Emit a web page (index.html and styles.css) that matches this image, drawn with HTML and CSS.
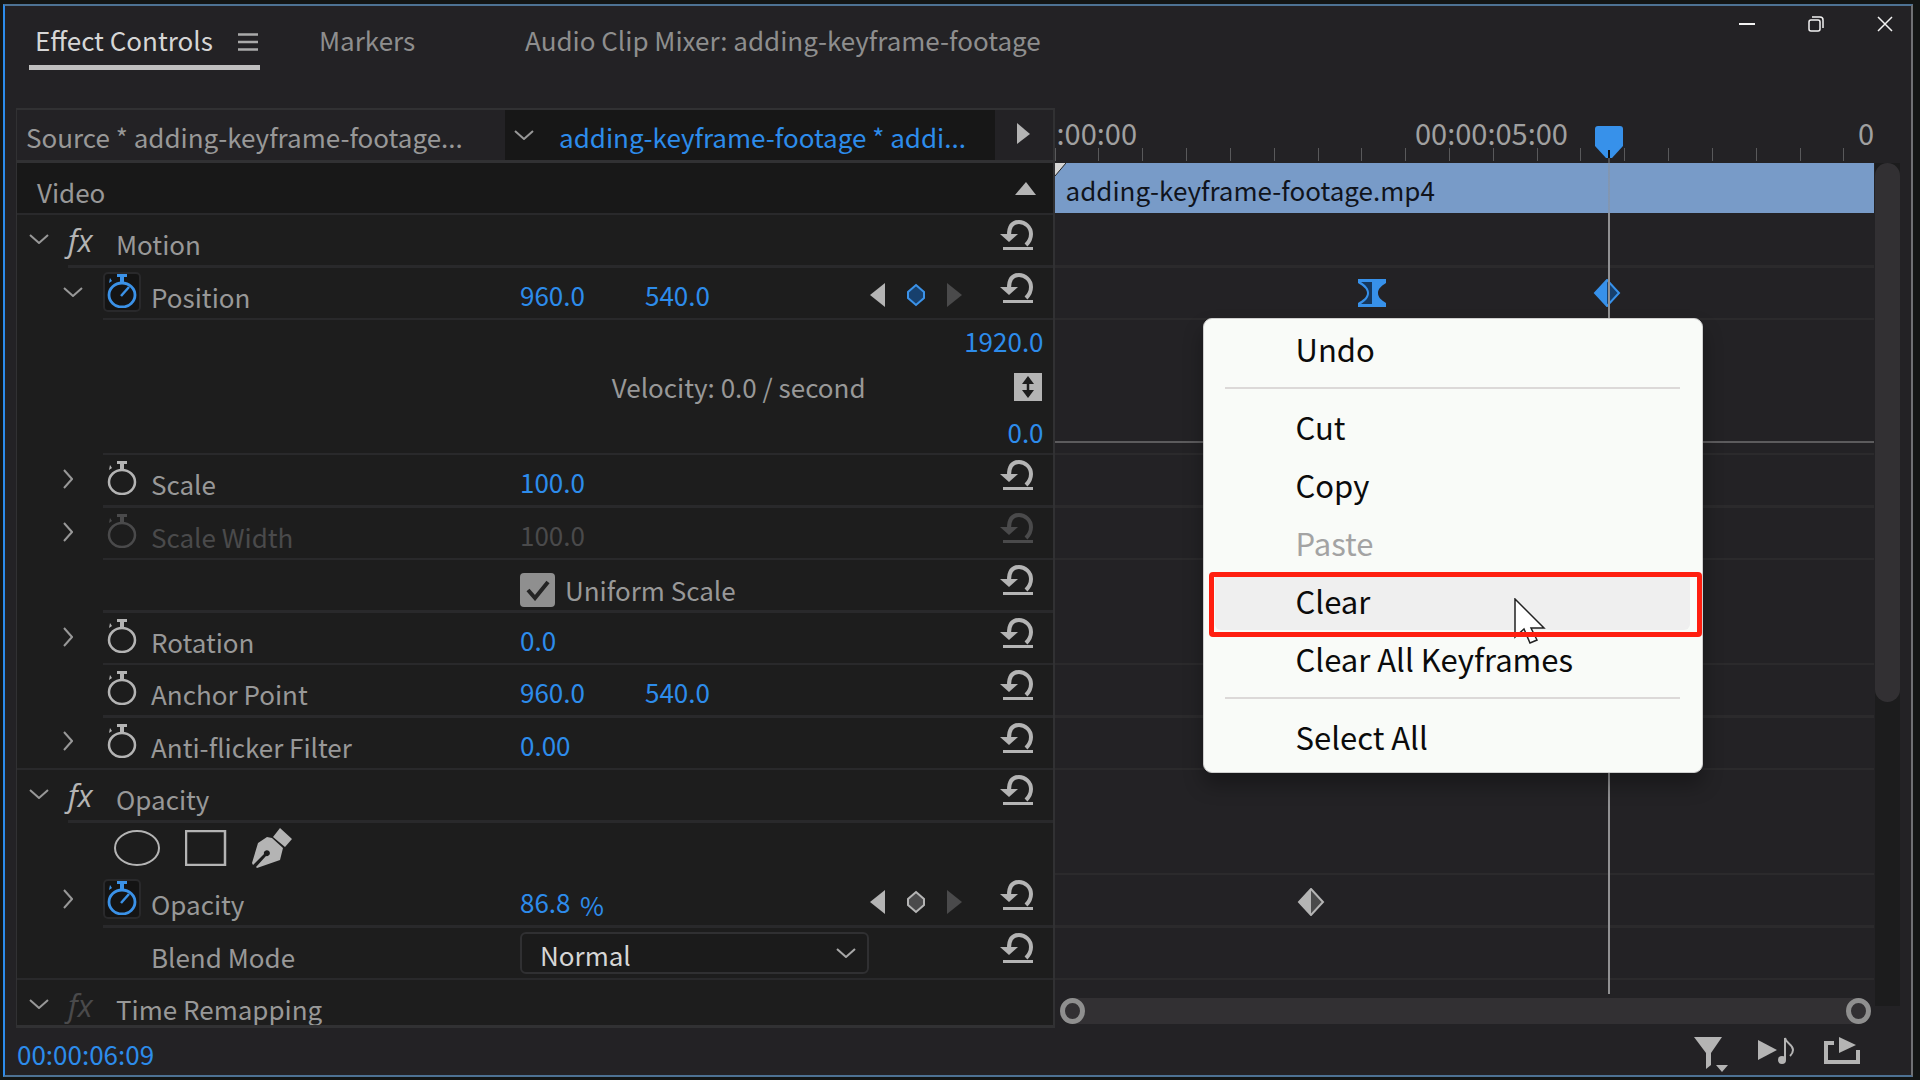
FILE: index.html
```html
<!DOCTYPE html>
<html lang="en">
<head>
<meta charset="utf-8">
<title>Effect Controls</title>
<link rel="stylesheet" href="styles.css">
</head>
<body>
<svg class="defs" aria-hidden="true">
  <symbol id="down" viewBox="0 0 20 10"><path d="M1 1 10 9 19 1" fill="none" stroke="currentColor" stroke-width="2"/></symbol>
  <symbol id="right" viewBox="0 0 10 20"><path d="M1 1 9 10 1 19" fill="none" stroke="currentColor" stroke-width="2"/></symbol>
  <symbol id="reset" viewBox="0 0 34 30"><path d="M9 15C9 6 13 2 19 2s12 5 12 12c0 5-2 8-5 11" fill="none" stroke="currentColor" stroke-width="4"/><path d="M0 14h18l-9 8zM3 27h30v3H3z" fill="currentColor"/></symbol>
  <symbol id="watch" viewBox="0 0 30 34"><ellipse cx="15" cy="21" rx="13" ry="12" fill="none" stroke="currentColor" stroke-width="2.5"/><path d="M10 0h10v3h-3v6h-4V3h-3zM3 4l2 3-3 2z" fill="currentColor"/></symbol>
  <symbol id="watch-on" viewBox="0 0 30 34"><ellipse cx="15" cy="21" rx="13" ry="12" fill="none" stroke="currentColor" stroke-width="2.8"/><path d="M10 0h10v3h-3v6h-4V3h-3zM3 4l2 3-3 2z" fill="currentColor"/><path d="M14 22l8-9" stroke="currentColor" stroke-width="2.5"/></symbol>
  <symbol id="prev" viewBox="0 0 15 24"><path d="M15 0v24L0 12z" fill="currentColor"/></symbol>
  <symbol id="next" viewBox="0 0 15 24"><path d="M0 0v24l15-12z" fill="currentColor"/></symbol>
  <symbol id="key" viewBox="0 0 20 24"><path d="M10 2l8 7v6l-8 7-8-7V9z" fill="var(--key-fill)" stroke="currentColor" stroke-width="2"/></symbol>
  <symbol id="diamond" viewBox="0 0 28 28"><path d="M14 1l12 13-12 13L2 14z" fill="var(--key-fill)" stroke="currentColor" stroke-width="2"/><path d="M14 1v26L2 14z" fill="currentColor"/></symbol>
  <symbol id="hourglass" viewBox="0 0 28 30"><path d="M0 1h28v4c-5 3-8 6-8 10s3 7 8 10v4H0v-4c5-3 9-6 9-10S5 8 0 5z" fill="currentColor"/><path d="M3 4h11v22H3c5-3 8-7 8-11S8 7 3 4z" fill="#16375c"/></symbol>
</svg>

<div class="window">
  <header class="tabs">
    <nav class="tab-list">
      <a class="tab active" href="#effects">Effect Controls
        <svg width="20" height="18" viewBox="0 0 20 18"><path d="M0 1.500h20M0 9h20M0 16.500h20" stroke="currentColor" stroke-width="2.500"/></svg></a>
      <a class="tab markers" href="#markers">Markers</a>
      <a class="tab" href="#mixer">Audio Clip Mixer: adding-keyframe-footage</a>
    </nav>
    <div class="win-buttons">
      <button aria-label="Minimize"><svg width="16" height="16"><path d="M0 8h16" stroke="currentColor" stroke-width="2"/></svg></button>
      <button aria-label="Restore"><svg width="16" height="16" fill="none" stroke="currentColor" stroke-width="1.500"><rect x="1" y="4" width="11" height="11" rx="2"/><path d="M4 1h8a3 3 0 0 1 3 3v8"/></svg></button>
      <button aria-label="Close"><svg width="16" height="16"><path d="M1 1l14 14M15 1L1 15" stroke="currentColor" stroke-width="1.500"/></svg></button>
    </div>
  </header>

  <main class="workspace">
    <section class="effects" id="effects">
      <div class="source-bar">
        <span class="source">Source * adding-keyframe-footage...</span>
        <button class="sequence"><svg class="down"><use href="#down"/></svg><span>adding-keyframe-footage * addi...</span></button>
        <button class="toggle-timeline" aria-label="Show timeline"><svg width="13" height="21" viewBox="0 0 13 21"><path d="M0 0v21l13-10z" fill="currentColor"/></svg></button>
      </div>
      <div class="video-head"><span>Video</span><button aria-label="Collapse"><svg width="21" height="13" viewBox="0 0 21 13"><path d="M0 13h21L11 0z" fill="currentColor"/></svg></button></div>

      <div class="row group thick">
        <div class="gutter"><svg class="down"><use href="#down"/></svg></div>
        <div class="line"><i class="fx">fx</i><span class="label">Motion</span><button class="reset" aria-label="Reset"><svg><use href="#reset"/></svg></button></div>
      </div>
      <div class="row">
        <div class="gutter"><svg class="down"><use href="#down"/></svg></div>
        <div class="line"><button class="watch on" aria-label="Toggle animation"><svg><use href="#watch-on"/></svg></button><span class="label">Position</span>
          <button class="value">960.0</button><button class="value">540.0</button>
          <div class="nav"><svg class="arrow"><use href="#prev"/></svg><svg class="dot blue"><use href="#key"/></svg><svg class="arrow off"><use href="#next"/></svg></div>
          <button class="reset" aria-label="Reset"><svg><use href="#reset"/></svg></button></div>
      </div>
      <div class="row graph">
        <div class="gutter"></div>
        <div class="line">
          <span class="velocity">Velocity: 0.0 / second</span>
          <div class="limits"><button class="value">1920.0</button>
            <svg width="28" height="28"><path d="M0 0h28v28H0z" fill="currentColor"/><path d="M14 5v18" stroke="#1d1d1d" stroke-width="2.500"/><path d="M14 3l6 8H8zM14 25l6-8H8z" fill="#1d1d1d"/></svg>
            <button class="value">0.0</button></div>
        </div>
      </div>
      <div class="row thick">
        <div class="gutter"><svg class="right"><use href="#right"/></svg></div>
        <div class="line"><button class="watch" aria-label="Toggle animation"><svg><use href="#watch"/></svg></button><span class="label">Scale</span><button class="value">100.0</button><button class="reset" aria-label="Reset"><svg><use href="#reset"/></svg></button></div>
      </div>
      <div class="row disabled">
        <div class="gutter"><svg class="right"><use href="#right"/></svg></div>
        <div class="line"><button class="watch" aria-label="Toggle animation" disabled><svg><use href="#watch"/></svg></button><span class="label">Scale Width</span><button class="value" disabled>100.0</button><button class="reset" aria-label="Reset" disabled><svg><use href="#reset"/></svg></button></div>
      </div>
      <div class="row thick">
        <div class="gutter"></div>
        <div class="line"><span class="label blank"></span><label class="check"><input type="checkbox" checked><svg width="24" height="22" viewBox="0 0 24 22"><path d="M2 11l7 8L22 3" fill="none" stroke="#242424" stroke-width="4"/></svg>Uniform Scale</label><button class="reset" aria-label="Reset"><svg><use href="#reset"/></svg></button></div>
      </div>
      <div class="row">
        <div class="gutter"><svg class="right"><use href="#right"/></svg></div>
        <div class="line"><button class="watch" aria-label="Toggle animation"><svg><use href="#watch"/></svg></button><span class="label">Rotation</span><button class="value">0.0</button><button class="reset" aria-label="Reset"><svg><use href="#reset"/></svg></button></div>
      </div>
      <div class="row thick">
        <div class="gutter"></div>
        <div class="line"><button class="watch" aria-label="Toggle animation"><svg><use href="#watch"/></svg></button><span class="label">Anchor Point</span><button class="value">960.0</button><button class="value">540.0</button><button class="reset" aria-label="Reset"><svg><use href="#reset"/></svg></button></div>
      </div>
      <div class="row full">
        <div class="gutter"><svg class="right"><use href="#right"/></svg></div>
        <div class="line"><button class="watch" aria-label="Toggle animation"><svg><use href="#watch"/></svg></button><span class="label">Anti-flicker Filter</span><button class="value">0.00</button><button class="reset" aria-label="Reset"><svg><use href="#reset"/></svg></button></div>
      </div>
      <div class="row group thick">
        <div class="gutter"><svg class="down"><use href="#down"/></svg></div>
        <div class="line"><i class="fx">fx</i><span class="label">Opacity</span><button class="reset" aria-label="Reset"><svg><use href="#reset"/></svg></button></div>
      </div>
      <div class="row bare">
        <div class="gutter"></div>
        <div class="line masks">
          <button aria-label="Ellipse mask"><svg width="46" height="36"><ellipse cx="23" cy="18" rx="22" ry="17" fill="none" stroke="currentColor" stroke-width="2"/></svg></button>
          <button aria-label="Rectangle mask"><svg width="42" height="36"><path d="M1 1h39v34H1z" fill="none" stroke="currentColor" stroke-width="2.500"/></svg></button>
          <button aria-label="Pen mask"><svg width="40" height="40"><path d="M28 0l12 11-7 8L21 9zM15 9l5 1 11 10-3 12L5 40l-1-1 10-11a3 3 0 1 0-2-2L1 37l-1-2 6-20z" fill="currentColor"/></svg></button>
        </div>
      </div>
      <div class="row thick">
        <div class="gutter"><svg class="right"><use href="#right"/></svg></div>
        <div class="line"><button class="watch on" aria-label="Toggle animation"><svg><use href="#watch-on"/></svg></button><span class="label">Opacity</span>
          <button class="value short">86.8</button><span class="unit">%</span>
          <div class="nav"><svg class="arrow"><use href="#prev"/></svg><svg class="dot"><use href="#key"/></svg><svg class="arrow off"><use href="#next"/></svg></div>
          <button class="reset" aria-label="Reset"><svg><use href="#reset"/></svg></button></div>
      </div>
      <div class="row full">
        <div class="gutter"></div>
        <div class="line"><label class="label blend" for="blend">Blend Mode</label><div class="select"><select id="blend"><option>Normal</option></select><svg class="down"><use href="#down"/></svg></div><button class="reset" aria-label="Reset"><svg><use href="#reset"/></svg></button></div>
      </div>
      <div class="row group bare">
        <div class="gutter"><svg class="down"><use href="#down"/></svg></div>
        <div class="line"><i class="fx off">fx</i><span class="label">Time Remapping</span></div>
      </div>
    </section>

    <section class="timeline">
      <div class="ruler">
        <div class="times"><span>:00:00</span><span class="mid">00:00:05:00</span><span>0</span></div>
        <div class="ticks"><b></b><b></b><b></b><b></b><b></b><b></b><b></b><b></b><b></b><b></b><b></b><b></b><b></b><b></b><b></b><b></b><b></b><b></b><b></b></div>
      </div>
      <div class="clip"><svg class="corner" width="11" height="13"><path d="M0 0h11L0 13z" fill="#d5d5d5"/><path d="M11 0L0 13" stroke="#222"/></svg>adding-keyframe-footage.mp4</div>
      <div class="lane thick"></div>
      <div class="lane">
        <svg class="frame f1"><use href="#hourglass"/></svg>
      </div>
      <div class="lane curve"></div>
      <div class="lane thick"></div>
      <div class="lane"></div>
      <div class="lane double"></div>
      <div class="lane thick"></div>
      <div class="lane"></div>
      <div class="lane double"></div>
      <div class="lane thick"><svg class="frame f3"><use href="#diamond"/></svg></div>
      <div class="lane"></div>
      <div class="hscroll"><span></span><span></span></div>
      <svg class="frame f2"><use href="#diamond"/></svg>
      <div class="playhead"><svg width="28" height="32" viewBox="0 0 28 32"><path d="M0 3a3 3 0 0 1 3-3h22a3 3 0 0 1 3 3v17L17 32h-6L0 20z" fill="#3791ea"/><path d="M14 24v8" stroke="#111" stroke-width="2"/></svg></div>

      <div class="menu" role="menu">
        <button>Undo</button>
        <hr>
        <button>Cut</button>
        <button>Copy</button>
        <button disabled>Paste</button>
        <button class="hover">Clear</button>
        <button>Clear All Keyframes</button>
        <hr>
        <button>Select All</button>
        <svg class="cursor" width="32" height="47" viewBox="0 0 32 47"><path d="M1 1v38l9-8 6 14 7-3-6-12h13z" fill="#fff" stroke="#222" stroke-width="1.500"/></svg>
        <div class="callout"></div>
      </div>
    </section>

    <div class="vscroll"><span></span></div>
  </main>

  <footer class="status">
    <span class="timecode">00:00:06:09</span>
    <button aria-label="Filter properties"><svg width="34" height="35"><path d="M0 0h28L17 16v12l-5 4V16zM22 28h12l-6 7z" fill="currentColor"/></svg></button>
    <button aria-label="Play audio"><svg width="38" height="35"><path d="M1 3v20l19-10z" fill="currentColor"/><ellipse cx="25" cy="23" rx="4" ry="4" fill="currentColor"/><path d="M28 23V1c1 6 8 6 8 12 0 2-1 4-3 6" fill="none" stroke="currentColor" stroke-width="2"/></svg></button>
    <button aria-label="Export frame"><svg width="36" height="35"><path d="M10 6H2v19h32V13" fill="none" stroke="currentColor" stroke-width="4"/><path d="M15 0v16l17-8z" fill="currentColor"/></svg></button>
  </footer>
</div>
</body>
</html>
```
FILE: styles.css
```css
* { box-sizing: border-box; }

body {
  margin: 0;
  height: 100vh;
  padding: 4px 7px 3px 3px;
  background: #131615;
  color: #989898;
  font: 26px/36px "Noto Sans CJK SC", "Noto Sans", sans-serif;
  --key-fill: #4a4a4b;
}

button {
  margin: 0;
  padding: 0;
  border: 0;
  background: none;
  color: inherit;
  font: inherit;
  text-align: left;
}

svg { display: block; flex: none; }
.defs { position: absolute; width: 0; height: 0; }
.down { width: 20px; height: 10px; }
.right { width: 10px; height: 20px; }

.window {
  display: flex;
  flex-direction: column;
  height: 100%;
  background: #232225;
  border: 2px solid #4d7294;
  border-left-color: #2d8ceb;
  border-right-color: #6f7174;
}

/* Tabs */
.tabs {
  display: flex;
  justify-content: space-between;
  height: 102px;
  flex: none;
}
.tab-list {
  display: flex;
  align-items: flex-start;
  padding: 16px 0 0 24px;
}
.tab {
  padding: 0 6px;
  height: 48px;
  color: #8e8e8e;
  text-decoration: none;
  white-space: nowrap;
}
.tab.active {
  display: flex;
  justify-content: space-between;
  width: 231px;
  padding: 0 2px 0 6px;
  border-bottom: 5px solid #bfbfbf;
  color: #d6d6d6;
}
.tab.active svg { margin-top: 11px; color: #aaa; }
.markers { width: 206px; margin-left: 53px; }
.win-buttons {
  display: flex;
  gap: 53px;
  align-items: flex-start;
  padding: 10px 18px 0 0;
  color: #f2f2f2;
}

/* Workspace */
.workspace {
  flex: 1;
  min-height: 0;
  display: grid;
  grid-template-columns: minmax(0, 1038fr) minmax(0, 819fr) 26px;
  padding: 0 11px;
}
.effects {
  overflow: hidden;
  background: #1d1d1d;
  border: 2px solid #313133;
  border-bottom-width: 3px;
  border-left-width: 1px;
}
.source-bar {
  display: flex;
  height: 53px;
  border-bottom: 3px solid #313133;
  background: #232225;
}
.source {
  width: 488px;
  padding: 9px 0 0 9px;
  white-space: nowrap;
  overflow: hidden;
}
.sequence {
  display: flex;
  align-items: center;
  gap: 25px;
  width: 490px;
  padding-left: 9px;
  background: #171717;
  white-space: nowrap;
}
.sequence span { padding-top: 3px; color: #2d8ceb; }
.toggle-timeline { padding: 0 0 4px 22px; color: #b4b4b4; }
.video-head {
  display: flex;
  justify-content: space-between;
  align-items: center;
  height: 52px;
  padding: 8px 17px 0 20px;
  border-bottom: 2px solid #29292b;
  background: #181818;
}
.video-head button { padding-bottom: 8px; color: #b4b4b4; }

/* Property rows */
.row { display: flex; height: 52px; }
.thick { height: 53px; }
.gutter {
  display: flex;
  align-items: center;
  width: 86px;
  flex: none;
  padding: 0 0 5px 46px;
}
.group .gutter { width: 51px; padding-left: 12px; }
.line {
  flex: 1;
  display: flex;
  align-items: center;
  border-bottom: 2px solid #29292b;
  padding-right: 19px;
}
.thick .line { border-bottom-width: 3px; }
.row.full { border-bottom: 2px solid #29292b; }
.full .line, .bare .line { border-bottom: 0; }
.bare .line { padding-bottom: 2px; }

.fx {
  width: 48px;
  color: #b4b4b4;
  font: italic 31px/36px "Open Sans", sans-serif;
}
.fx.off { color: #4a4a4b; }
.label { width: 369px; padding-top: 8px; white-space: nowrap; }
.blank { width: 417px; }
.blend { margin-left: 48px; }
.watch {
  display: flex;
  justify-content: center;
  width: 38px;
  height: 40px;
  margin: 0 10px 2px 0;
  border: 2px solid transparent;
  border-radius: 5px;
  color: #b4b4b4;
}
.watch svg { width: 30px; height: 34px; }
.watch.on { background: #141414; border-color: #29292b; color: #3b92e8; }
.value { width: 125px; padding-top: 3px; color: #2d8ceb; }
.value.short { width: 60px; }
.unit { padding-top: 10px; color: #2d8ceb; }
.nav {
  display: flex;
  align-items: center;
  gap: 21px;
  margin-left: auto;
  padding-top: 3px;
  margin-right: 38px;
  color: #b4b4b4;
}
.arrow { width: 15px; height: 24px; }
.arrow.off { color: #4a4a4b; }
.dot { width: 20px; height: 24px; }
.blue { --key-fill: #17406d; color: #3b92e8; }
.reset { margin-left: auto; padding-bottom: 10px; color: #b4b4b4; }
.nav + .reset { margin-left: 0; }
.reset svg { width: 34px; height: 30px; }
.disabled .line button, .disabled .label { color: #4a4a4b; }

.graph { height: 135px; }
.graph .line { padding-right: 9px; justify-content: flex-end; }
.velocity { margin-right: 98px; }
.limits {
  display: flex;
  flex-direction: column;
  align-items: flex-end;
  justify-content: space-between;
  width: 80px;
  height: 127px;
  color: #b4b4b4;
}
.limits .value { width: auto; padding: 0; }
.limits svg { margin-right: 2px; }

.check {
  display: flex;
  align-items: center;
  padding-top: 10px;
  position: relative;
}
.check input {
  appearance: none;
  width: 35px;
  height: 34px;
  margin: 0 10px 0 0;
  border-radius: 4px;
  background: #8f8f8f;
}
.check svg { position: absolute; left: 6px; top: 17px; }

.masks { gap: 25px; padding-left: 11px; color: #b4b4b4; }

.select { position: relative; width: 349px; }
.select select {
  appearance: none;
  display: block;
  width: 100%;
  height: 42px;
  padding: 3px 18px 0;
  border: 2px solid #303032;
  border-radius: 6px;
  background: #1b1b1b;
  color: #d6d6d6;
  font: inherit;
}
.select svg { position: absolute; right: 13px; top: 16px; color: #a8a8a8; }

/* Timeline */
.timeline { position: relative; display: flex; flex-direction: column; }
.ruler {
  display: flex;
  flex-direction: column;
  justify-content: space-between;
  height: 55px;
  padding-bottom: 2px;
}
.times {
  display: flex;
  height: 40px;
  padding: 6px 0 0 2px;
  font-size: 29px;
  color: #a0a0a0;
}
.mid { margin: 0 auto 0 34%; }
.times span { white-space: nowrap; }
.ticks { display: flex; overflow: hidden; flex: none; }
.ticks b { flex: 0 0 5.35%; height: 13px; border-left: 1px solid #59595b; }
.clip {
  position: relative;
  height: 50px;
  margin-bottom: 2px;
  padding: 9px 0 0 11px;
  background: #789bc8;
  color: #10141c;
}
.corner { position: absolute; left: 0; top: 0; }
.lane {
  position: relative;
  height: 52px;
  flex: none;
  border-bottom: 2px solid #2b2a2c;
}
.lane.thick { height: 53px; border-bottom-width: 3px; }
.lane.double { height: 105px; }
.lane.curve {
  height: 135px;
  background: linear-gradient(#5c5b5d, #5c5b5d) 0 121px / 100% 2px no-repeat;
}
.frame { position: absolute; width: 28px; height: 28px; }
.f1 { left: 37%; top: 10px; height: 30px; color: #3791ea; }
.f2 { left: 66%; top: 171px; margin-left: -2px; color: #3791ea; --key-fill: #17406d; }
.f3 { left: 30%; top: 13px; margin-left: -3px; color: #b4b4b4; }
.playhead {
  position: absolute;
  left: 66%;
  top: 18px;
  bottom: 34px;
  width: 28px;
  background: linear-gradient(rgba(144, 144, 146, .4) 87px, #909092 87px) 50% 0 / 2px 100% no-repeat;
}
.hscroll {
  display: flex;
  justify-content: space-between;
  height: 26px;
  margin: auto 3px 4px 5px;
  border-radius: 13px;
  background: #323033;
}
.hscroll span {
  width: 25px;
  height: 26px;
  border: 5px solid #8f8f8f;
  border-radius: 50%;
}
.vscroll {
  height: 843px;
  margin: 55px 0 0 1px;
  background: #1c1c1d;
}
.vscroll span {
  display: block;
  height: 539px;
  border-radius: 13px;
  background: #323033;
}

/* Context menu */
.menu {
  position: absolute;
  left: 148px;
  top: 210px;
  width: 500px;
  padding: 1px 12px 6px 11px;
  border: 1px solid #cfcfcf;
  border-radius: 9px;
  background: #f9fbf8;
  box-shadow: 0 12px 20px rgba(0, 0, 0, .3);
  color: #0b0b0b;
  font-size: 31px;
}
.menu button {
  display: block;
  width: 100%;
  height: 58px;
  padding-left: 81px;
  border-radius: 6px;
}
.menu button:disabled { color: #a3a3a3; }
.menu .hover { background: #efefef; }
.menu hr {
  height: 2px;
  margin: 9px 10px;
  border: 0;
  background: #dcd9d8;
}
.cursor { position: absolute; left: 310px; top: 279px; }
.callout {
  position: absolute;
  left: 5px;
  right: 0;
  top: 253px;
  height: 65px;
  border: 5px solid #ff1f10;
  border-radius: 4px;
}

/* Status bar */
.status {
  display: flex;
  align-items: center;
  gap: 29px;
  height: 47px;
  flex: none;
  padding: 4px 51px 0 12px;
  color: #b4b4b4;
}
.status svg { margin-top: 2px; }
.timecode { margin-right: auto; color: #2d8ceb; }
```
